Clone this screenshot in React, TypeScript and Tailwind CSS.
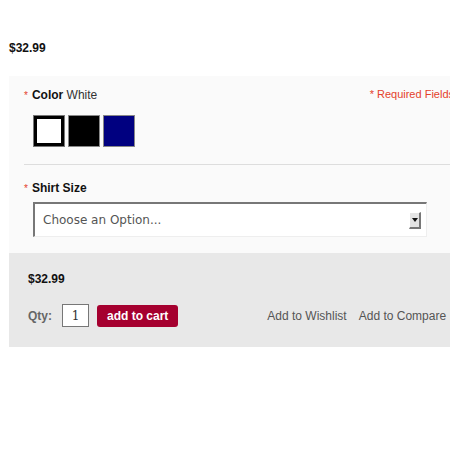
import React, { useState } from 'react';

const swatches = [
  { name: 'White', color: 'bg-white' },
  { name: 'Black', color: 'bg-black' },
  { name: 'Navy', color: 'bg-[#000080]' },
];

export default function App() {
  const [selected, setSelected] = useState('White');
  const [qty, setQty] = useState('1');

  return (
    <div className="w-[450px] h-[450px] overflow-hidden bg-white font-['Liberation_Sans',Arial,sans-serif]">
      <div className="pl-[9px] pt-[41px] w-[454px]">
        {/* Price */}
        <p className="text-[12px] leading-[14px] font-bold text-[#111]">$32.99</p>

        {/* Options */}
        <div className="mt-[21px] bg-[#fafafa]">
          <div className="pl-[15px] pt-[11px] pb-[16px]">
            <div className="flex items-start justify-between">
              <div className="text-[12px] leading-[16px] text-[#111]">
                <span className="text-[#e4412b] text-[10px] mr-[4px]">*</span>
                <span className="font-bold">Color</span> <span className="text-[#333]">White</span>
              </div>
              <div className="text-[11px] leading-[14px] text-[#e4412b] whitespace-nowrap">* Required Fields</div>
            </div>

            <div className="flex gap-[3px] ml-[9px] mt-[11px]">
              {swatches.map(s => (
                <button
                  key={s.name}
                  onClick={() => setSelected(s.name)}
                  className={
                    selected === s.name
                      ? 'w-[32px] h-[32px] border border-[#777] p-0'
                      : 'w-[32px] h-[32px] border border-[#888] p-0'
                  }
                >
                  <div
                    className={
                      selected === s.name
                        ? `w-full h-full border-[3px] border-black ${s.color}`
                        : `w-full h-full ${s.color}`
                    }
                  />
                </button>
              ))}
            </div>

            <div className="mt-[17px] border-t border-[#dddddd]" />

            <div className="mt-[15px] text-[12px] leading-[16px] text-[#111]">
              <span className="text-[#e4412b] text-[10px] mr-[4px]">*</span>
              <span className="font-bold">Shirt Size</span>
            </div>

            <div className="ml-[9px] mt-[5px] w-[394px] h-[35px] bg-white border-t-2 border-l-2 border-r border-b border-t-[#777] border-l-[#777] border-r-[#eee] border-b-[#eee] flex items-center justify-between pl-[8px] pr-[5px]">
              <span className="font-['DejaVu_Sans',sans-serif] text-[12px] text-[#555]">Choose an Option...</span>
              <span className="w-[12px] h-[17px] bg-[#e4e4e4] border-r-2 border-b-2 border-r-[#777] border-b-[#777] border-t border-l border-t-white border-l-white flex items-center justify-center">
                <svg width="6" height="4" viewBox="0 0 6 4">
                  <path d="M0 0h6L3 4z" fill="#111" />
                </svg>
              </span>
            </div>
          </div>

          {/* Add to cart */}
          <div className="bg-[#e8e8e8] pl-[19px] pt-[18px] pb-[20px]">
            <p className="text-[12px] leading-[16px] font-bold text-[#111]">$32.99</p>
            <div className="mt-[17px] flex items-center">
              <label className="text-[12px] font-bold text-[#666]">Qty:</label>
              <input
                value={qty}
                onChange={e => setQty(e.target.value)}
                className="ml-[10px] w-[27px] h-[23px] bg-white border border-[#777] text-center text-[12px] text-[#333] font-['DejaVu_Serif',serif] outline-none"
              />
              <button className="ml-[8px] h-[22px] px-[10px] rounded-[3px] bg-[#a5002f] text-white text-[12px] font-bold leading-[22px]">
                add to cart
              </button>
              <a className="ml-[89px] text-[12px] text-[#555]">Add to Wishlist</a>
              <a className="ml-[12px] text-[12px] text-[#555]">Add to Compare</a>
            </div>
          </div>
        </div>
      </div>
    </div>
  );
}
